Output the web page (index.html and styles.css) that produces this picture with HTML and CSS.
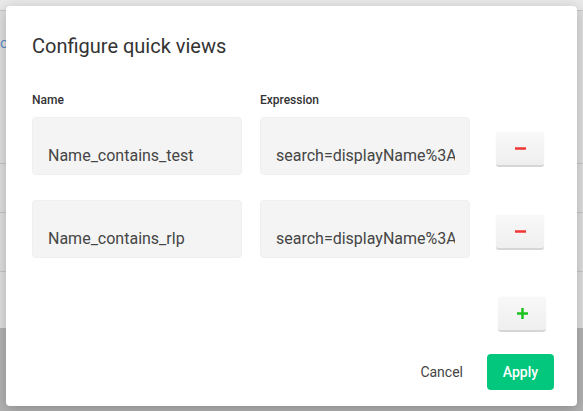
FILE: index.html
```html
<!DOCTYPE html>
<html>
<head>
<meta charset="utf-8">
<link rel="stylesheet" href="styles.css">
</head>
<body>
<div class="page">
  <div class="bg-row bg-top"></div>
  <div class="bg-row bg-r1"><span class="bg-text">o</span></div>
  <div class="bg-row bg-r2"></div>
  <div class="bg-row bg-r3"></div>
  <div class="bg-row bg-r4"></div>
  <div class="bg-dark"></div>

  <div class="dialog">
    <h1 class="title">Configure quick views</h1>
    <div class="head">
      <div class="label">Name</div>
      <div class="label">Expression</div>
    </div>
    <div class="rows">
      <div class="row">
        <input class="field" type="text" value="Name_contains_test">
        <input class="field" type="text" value="search=displayName%3Atest">
        <button class="btn-icon minus"><svg width="11" height="3" viewBox="0 0 11 3"><rect width="11" height="2.5" y="0.25" fill="#f23535"/></svg></button>
      </div>
      <div class="row">
        <input class="field" type="text" value="Name_contains_rlp">
        <input class="field" type="text" value="search=displayName%3Arlp">
        <button class="btn-icon minus"><svg width="11" height="3" viewBox="0 0 11 3"><rect width="11" height="2.5" y="0.25" fill="#f23535"/></svg></button>
      </div>
    </div>
    <div class="add-row">
      <button class="btn-icon plus"><svg width="11" height="11" viewBox="0 0 11 11"><rect x="0" y="4.25" width="11" height="2.5" fill="#1ec21e"/><rect x="4.25" y="0" width="2.5" height="11" fill="#1ec21e"/></svg></button>
    </div>
    <div class="footer">
      <button class="btn-text">Cancel</button>
      <button class="btn-primary">Apply</button>
    </div>
  </div>
</div>
</body>
</html>
```

FILE: styles.css
```css
* { box-sizing: border-box; }
html, body { margin: 0; padding: 0; }
body { font-family: Roboto, "Noto Sans", sans-serif; }

.page {
  position: relative;
  width: 583px;
  height: 411px;
  overflow: hidden;
  background: #e1e1e1;
  display: flex;
  flex-direction: column;
}
.bg-row { border-bottom: 1px solid #c6c6c6; background: #dedede; }
.bg-top { height: 11px; background: #e9e9e9; }
.bg-r1 { height: 153px; }
.bg-r2 { height: 49px; }
.bg-r3 { height: 59px; }
.bg-r4 { height: 56px; border-bottom: none; }
.bg-dark {
  flex: 1;
  background: #b2b2b2;
}
.bg-text {
  display: block;
  margin: 24px 0 0 0;
  font-size: 14px;
  color: #5b8fc4;
}

.dialog {
  position: absolute;
  left: 6px;
  top: 6px;
  width: 571px;
  height: 400px;
  background: #fff;
  border-radius: 4px;
  box-shadow: 0 3px 14px rgba(0,0,0,0.22);
  padding: 28px 23px 16px 26px;
  display: flex;
  flex-direction: column;
}
.title {
  margin: 0;
  font-size: 20px;
  line-height: 24px;
  font-weight: 400;
  color: #333;
}
.head {
  margin-top: 34px;
  display: flex;
  gap: 18px;
}
.label {
  width: 210px;
  font-size: 12px;
  line-height: 16px;
  font-weight: 500;
  color: #333;
}
.rows {
  margin-top: 9px;
  display: flex;
  flex-direction: column;
  gap: 25px;
}
.row {
  display: flex;
  align-items: flex-start;
  gap: 18px;
}
.field {
  width: 210px;
  height: 58px;
  margin: 0;
  border: 1px solid #efefef;
  border-radius: 4px;
  background: #f4f4f4;
  padding: 18px 14px 0 15px;
  font-family: Roboto, "Noto Sans", sans-serif;
  font-size: 16px;
  color: #454545;
  outline: none;
}
.btn-icon {
  width: 48px;
  height: 33px;
  margin: 0;
  padding: 0;
  border: none;
  border-radius: 3px;
  background: linear-gradient(#f8f8f8, #efefef);
  box-shadow: 0 2px 0 #d6d6d6, 0 0 1px rgba(0,0,0,0.1);
  display: flex;
  align-items: center;
  justify-content: center;
}
.minus {
  margin-top: 15px;
  margin-left: 8px;
}
.add-row {
  margin-top: 39px;
  display: flex;
  justify-content: flex-end;
  padding-right: 8px;
}
.footer {
  margin-top: 24px;
  display: flex;
  justify-content: flex-end;
  align-items: center;
}
.btn-text {
  height: 36px;
  margin: 0 12px 0 0;
  padding: 0 12px;
  border: none;
  background: transparent;
  font-family: Roboto, "Noto Sans", sans-serif;
  font-size: 14px;
  color: #444;
}
.btn-primary {
  width: 67px;
  height: 36px;
  margin: 0;
  padding: 0;
  border: none;
  border-radius: 4px;
  background: #03c77c;
  font-family: Roboto, "Noto Sans", sans-serif;
  font-size: 14px;
  font-weight: 500;
  color: #fff;
}
```
